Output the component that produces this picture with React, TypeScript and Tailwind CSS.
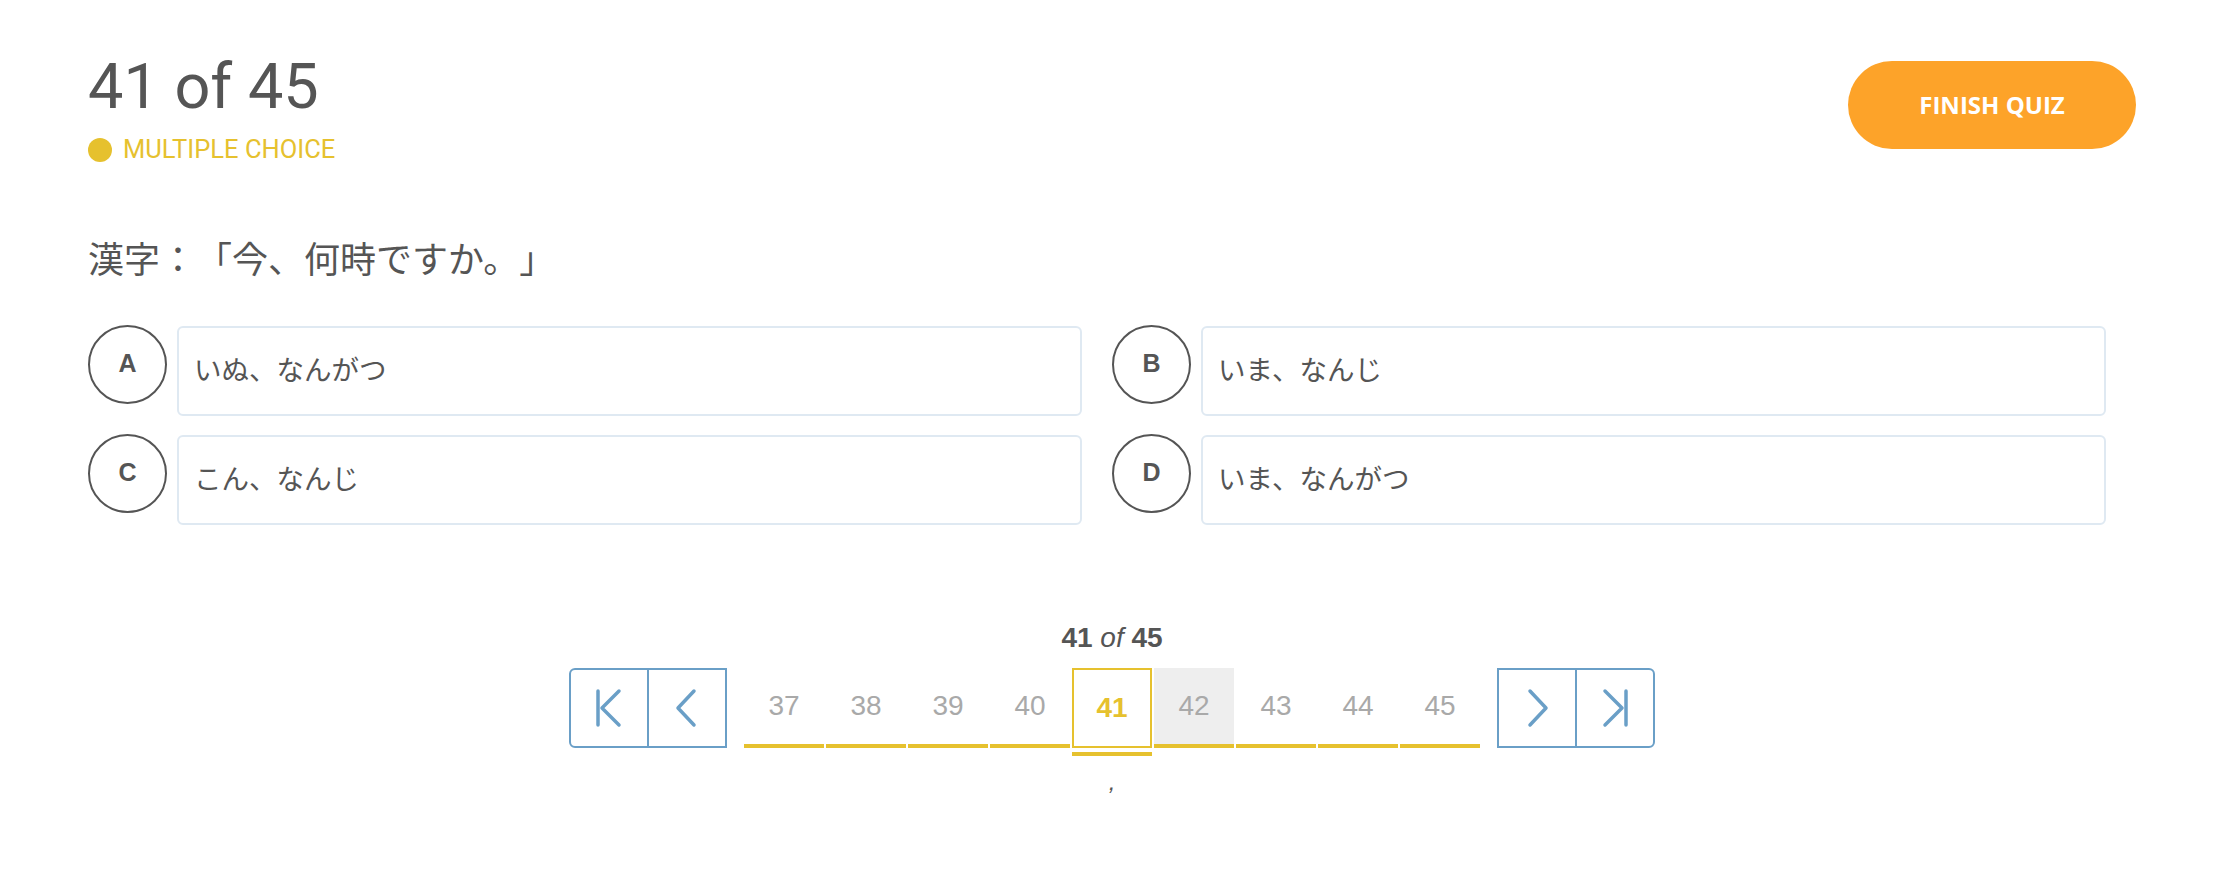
import React from 'react';

const OPTIONS = [
  { key: 'A', text: 'いぬ、なんがつ' },
  { key: 'B', text: 'いま、なんじ' },
  { key: 'C', text: 'こん、なんじ' },
  { key: 'D', text: 'いま、なんがつ' },
];

const PAGES = [37, 38, 39, 40, 41, 42, 43, 44, 45];
const CURRENT = 41;

function FirstIcon() {
  return (
    <svg width="28" height="40" viewBox="0 0 28 40" fill="none" stroke="currentColor" strokeWidth="3.5" strokeLinecap="round" strokeLinejoin="round">
      <path d="M3 3V37" />
      <path d="M24 3L7 20L24 37" />
    </svg>
  );
}

function PrevIcon() {
  return (
    <svg width="24" height="40" viewBox="0 0 24 40" fill="none" stroke="currentColor" strokeWidth="3.5" strokeLinecap="round" strokeLinejoin="round">
      <path d="M19 3L3 20L19 37" />
    </svg>
  );
}

function NextIcon() {
  return (
    <svg width="24" height="40" viewBox="0 0 24 40" fill="none" stroke="currentColor" strokeWidth="3.5" strokeLinecap="round" strokeLinejoin="round">
      <path d="M5 3L21 20L5 37" />
    </svg>
  );
}

function LastIcon() {
  return (
    <svg width="28" height="40" viewBox="0 0 28 40" fill="none" stroke="currentColor" strokeWidth="3.5" strokeLinecap="round" strokeLinejoin="round">
      <path d="M25 3V37" />
      <path d="M4 3L21 20L4 37" />
    </svg>
  );
}

export default function App() {
  return (
    <div className="min-h-screen bg-white pl-[88px] pr-[91px] pt-[55px] text-[#555]">
      {/* Header */}
      <div className="flex items-start justify-between">
        <div>
          <h1 className="font-['Roboto',sans-serif] text-[63px] leading-none font-normal">41 of 45</h1>
          <div className="mt-[19px] flex items-center gap-[11px]">
            <span className="w-[24px] h-[24px] rounded-full bg-[#e6c12e]" />
            <span className="font-['Roboto',sans-serif] text-[25.5px] leading-none text-[#e6c12e]">MULTIPLE CHOICE</span>
          </div>
        </div>
        <button className="mt-[6px] w-[288px] h-[88px] rounded-full bg-[#fda329] text-white font-['Open_Sans',sans-serif] font-bold text-[24px]">
          FINISH QUIZ
        </button>
      </div>

      {/* Question */}
      <p className="mt-[76px] font-['Noto_Sans_CJK_JP',sans-serif] text-[36px] leading-none [text-spacing-trim:space-all]">
        漢字：「今、何時ですか。」
      </p>

      {/* Options */}
      <div className="mt-[50px] grid grid-cols-2 gap-y-[18px]">
        {OPTIONS.map((o) => (
          <div key={o.key} className="flex items-start gap-[10px] pr-[30px]">
            <div className="w-[79px] h-[79px] shrink-0 rounded-full border-2 border-[#555] flex items-center justify-center font-['Liberation_Sans',sans-serif] font-bold text-[25px]">
              {o.key}
            </div>
            <div className="flex-1 h-[90px] mt-[1px] rounded-[6px] border-2 border-[#dfe9f2] flex items-center px-[15px] pb-[4px] font-['Noto_Sans_CJK_JP',sans-serif] text-[27.5px] [text-spacing-trim:space-all]">
              {o.text}
            </div>
          </div>
        ))}
      </div>

      {/* Pagination */}
      <div className="mt-[99px] flex flex-col items-center font-['Liberation_Sans',sans-serif]">
        <div className="text-[28px] leading-none">
          <span className="font-bold">41</span> <em>of</em> <span className="font-bold">45</span>
        </div>
        <div className="mt-[16px] flex items-start gap-[17px]">
          <div className="flex h-[80px] border-2 border-[#6a9fc7] rounded-l-[6px] text-[#6a9fc7]">
            <button className="w-[78px] flex items-center justify-center border-r-2 border-[#6a9fc7]">
              <FirstIcon />
            </button>
            <button className="w-[76px] flex items-center justify-center">
              <PrevIcon />
            </button>
          </div>

          <div className="flex items-start gap-[2px]">
            {PAGES.map((p) =>
              p === CURRENT ? (
                <div key={p} className="w-[80px] flex flex-col">
                  <div className="h-[80px] border-2 border-[#e6c12e] flex items-center justify-center text-[28px] font-bold text-[#e6c12e]">
                    {p}
                  </div>
                  <div className="mt-[4px] h-[4px] bg-[#e6c12e]" />
                </div>
              ) : (
                <div key={p} className="w-[80px] flex flex-col">
                  <div className={`h-[76px] flex items-center justify-center text-[28px] text-[#a9a9a9] ${p === 42 ? 'bg-[#eeeeee]' : ''}`}>
                    {p}
                  </div>
                  <div className="h-[4px] bg-[#e6c12e]" />
                </div>
              )
            )}
          </div>

          <div className="flex h-[80px] border-2 border-[#6a9fc7] rounded-r-[6px] text-[#6a9fc7]">
            <button className="w-[78px] flex items-center justify-center border-r-2 border-[#6a9fc7]">
              <NextIcon />
            </button>
            <button className="w-[76px] flex items-center justify-center">
              <LastIcon />
            </button>
          </div>
        </div>
        <div className="mt-[14px] text-[24px] leading-none italic">,</div>
      </div>
    </div>
  );
}
